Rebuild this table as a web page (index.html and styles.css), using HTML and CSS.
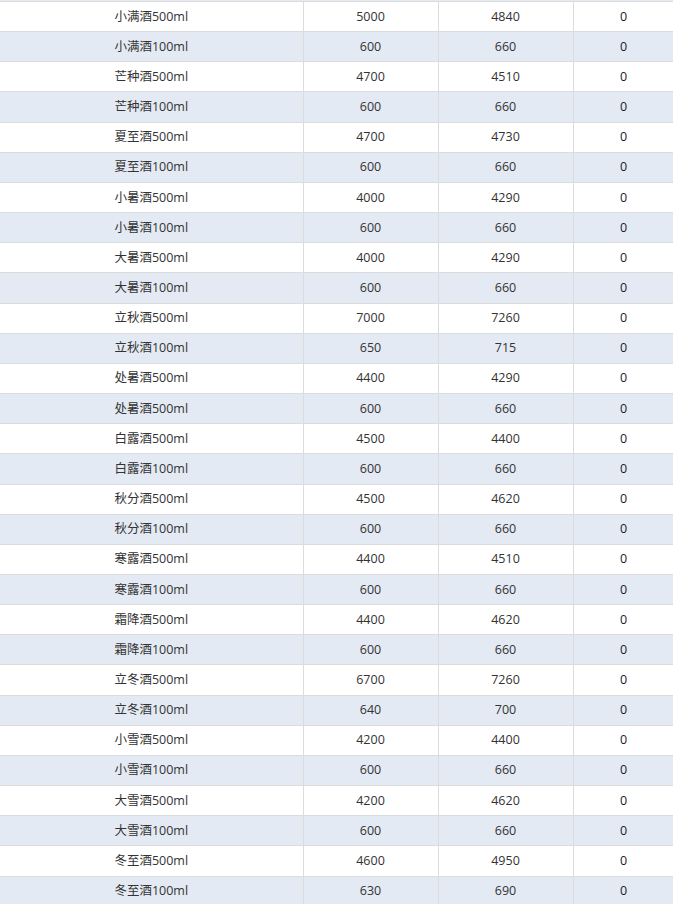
FILE: index.html
```html
<!DOCTYPE html>
<html lang="zh-CN">
<head>
<meta charset="utf-8">
<title>价格表</title>
<link rel="stylesheet" href="styles.css">
</head>
<body>
<div class="prev-row"></div>
<table class="price-table">
<colgroup><col class="c-name"><col class="c-num"><col class="c-num"><col class="c-last"></colgroup>
<tbody>
<tr><td>小满酒500ml</td><td>5000</td><td>4840</td><td class="z">0</td></tr>
<tr class="alt"><td>小满酒100ml</td><td>600</td><td>660</td><td class="z">0</td></tr>
<tr><td>芒种酒500ml</td><td>4700</td><td>4510</td><td class="z">0</td></tr>
<tr class="alt"><td>芒种酒100ml</td><td>600</td><td>660</td><td class="z">0</td></tr>
<tr><td>夏至酒500ml</td><td>4700</td><td>4730</td><td class="z">0</td></tr>
<tr class="alt"><td>夏至酒100ml</td><td>600</td><td>660</td><td class="z">0</td></tr>
<tr><td>小暑酒500ml</td><td>4000</td><td>4290</td><td class="z">0</td></tr>
<tr class="alt"><td>小暑酒100ml</td><td>600</td><td>660</td><td class="z">0</td></tr>
<tr><td>大暑酒500ml</td><td>4000</td><td>4290</td><td class="z">0</td></tr>
<tr class="alt"><td>大暑酒100ml</td><td>600</td><td>660</td><td class="z">0</td></tr>
<tr><td>立秋酒500ml</td><td>7000</td><td>7260</td><td class="z">0</td></tr>
<tr class="alt"><td>立秋酒100ml</td><td>650</td><td>715</td><td class="z">0</td></tr>
<tr><td>处暑酒500ml</td><td>4400</td><td>4290</td><td class="z">0</td></tr>
<tr class="alt"><td>处暑酒500ml</td><td>600</td><td>660</td><td class="z">0</td></tr>
<tr><td>白露酒500ml</td><td>4500</td><td>4400</td><td class="z">0</td></tr>
<tr class="alt"><td>白露酒100ml</td><td>600</td><td>660</td><td class="z">0</td></tr>
<tr><td>秋分酒500ml</td><td>4500</td><td>4620</td><td class="z">0</td></tr>
<tr class="alt"><td>秋分酒100ml</td><td>600</td><td>660</td><td class="z">0</td></tr>
<tr><td>寒露酒500ml</td><td>4400</td><td>4510</td><td class="z">0</td></tr>
<tr class="alt"><td>寒露酒100ml</td><td>600</td><td>660</td><td class="z">0</td></tr>
<tr><td>霜降酒500ml</td><td>4400</td><td>4620</td><td class="z">0</td></tr>
<tr class="alt"><td>霜降酒100ml</td><td>600</td><td>660</td><td class="z">0</td></tr>
<tr><td>立冬酒500ml</td><td>6700</td><td>7260</td><td class="z">0</td></tr>
<tr class="alt"><td>立冬酒100ml</td><td>640</td><td>700</td><td class="z">0</td></tr>
<tr><td>小雪酒500ml</td><td>4200</td><td>4400</td><td class="z">0</td></tr>
<tr class="alt"><td>小雪酒100ml</td><td>600</td><td>660</td><td class="z">0</td></tr>
<tr><td>大雪酒500ml</td><td>4200</td><td>4620</td><td class="z">0</td></tr>
<tr class="alt"><td>大雪酒100ml</td><td>600</td><td>660</td><td class="z">0</td></tr>
<tr><td>冬至酒500ml</td><td>4600</td><td>4950</td><td class="z">0</td></tr>
<tr class="alt"><td>冬至酒100ml</td><td>630</td><td>690</td><td class="z">0</td></tr>
</tbody>
</table>
</body>
</html>
```
FILE: styles.css
```css
html, body {
  margin: 0;
  padding: 0;
  background: #ffffff;
  overflow: hidden;
}
body {
  width: 673px;
  height: 904px;
  font-family: "Open Sans", "Noto Sans CJK SC", sans-serif;
  font-size: 12.5px;
  color: #333333;
}
.prev-row {
  height: 1px;
  width: 673px;
  background: #e4eaf4;
}
.price-table {
  border-collapse: collapse;
  table-layout: fixed;
  width: 674px;
}
.c-name { width: 303px; }
.c-num { width: 135px; }
.c-last { width: 101px; }
.price-table td {
  height: 29.17px;
  padding: 0;
  text-align: center;
  vertical-align: middle;
  border-top: 1px solid #dcdcdc;
  border-bottom: 1px solid #dcdcdc;
  border-right: 1px solid #dcdcdc;
  line-height: 16px;
  white-space: nowrap;
}
.price-table tr.alt td {
  background: #e4eaf4;
}
.price-table td.z {
  color: #1a1a2a;
}
```
